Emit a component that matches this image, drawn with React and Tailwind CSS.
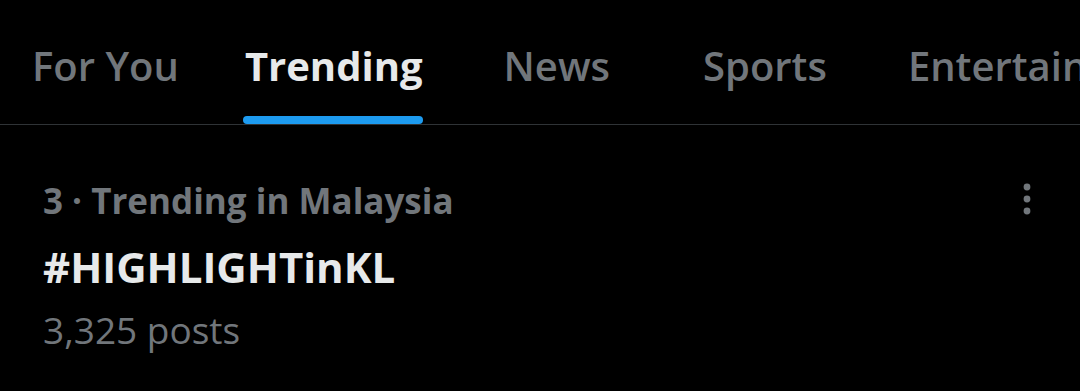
import {useState} from "react";

const tabs = [
    {label: "For You", className: "ml-[32px]"},
    {label: "Trending", className: "ml-[66px]"},
    {label: "News", className: "ml-[81px]"},
    {label: "Sports", className: "ml-[93px]"},
    {label: "Entertainment", className: "ml-[81px]"},
];

const MoreIcon = () => (
    <svg width="8" height="32" viewBox="0 0 8 32" className="text-[#71767b]">
        <circle cx="4" cy="4" r="3.4" fill="currentColor"/>
        <circle cx="4" cy="16" r="3.4" fill="currentColor"/>
        <circle cx="4" cy="28" r="3.4" fill="currentColor"/>
    </svg>
);

const App = () => {
    const [activeTab, setActiveTab] = useState("Trending");

    return (
        <div
            className="w-[1080px] h-[391px] bg-black overflow-hidden"
            style={{fontFamily: '"Open Sans", "Noto Sans", sans-serif'}}
        >
            <div className="flex h-[125px] whitespace-nowrap border-b border-[#2f3336]">
                {tabs.map((tab) => (
                    <button
                        key={tab.label}
                        onClick={() => setActiveTab(tab.label)}
                        className={`relative flex flex-col items-center shrink-0 pt-[38px] ${tab.className}`}
                    >
                        <span
                            className={`text-[40px] leading-[56px] ${
                                activeTab === tab.label ? "font-bold text-[#e7e9ea]" : "font-semibold text-[#71767b]"
                            }`}
                        >
                            {tab.label}
                        </span>
                        {activeTab === tab.label && (
                            <span className="absolute bottom-0 left-[-2px] right-0 h-[8px] rounded-full bg-[#1d9bf0]"/>
                        )}
                    </button>
                ))}
            </div>

            <div className="flex justify-between pl-[43px] pr-[49px] pt-[56px]">
                <div className="flex flex-col whitespace-nowrap">
                    <span className="text-[35px] leading-[40px] font-bold text-[#71767b]">
                        3 · Trending in Malaysia
                    </span>
                    <span className="mt-[26px] text-[42px] leading-[40px] font-bold text-[#e7e9ea]">
                        #HIGHLIGHTinKL
                    </span>
                    <span className="mt-[23px] text-[37px] leading-[40px] text-[#71767b]">
                        3,325 posts
                    </span>
                </div>
                <div className="pt-[2px]">
                    <MoreIcon/>
                </div>
            </div>
        </div>
    );
};

export default App;
